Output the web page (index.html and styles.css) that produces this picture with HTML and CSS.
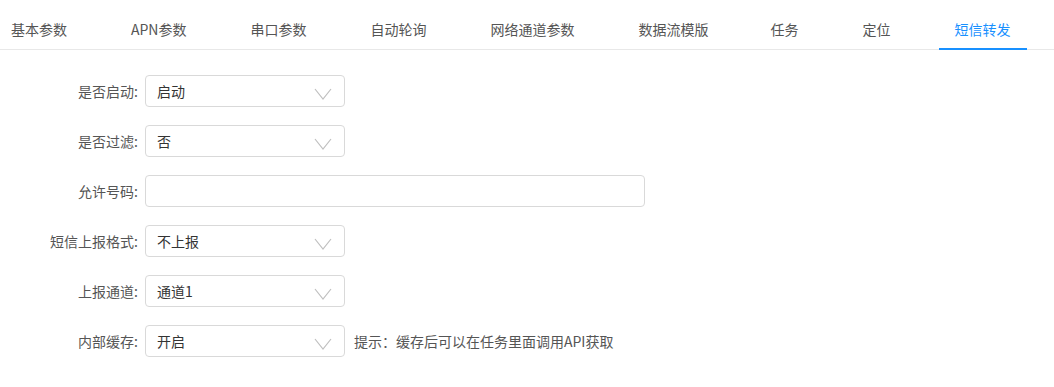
FILE: index.html
```html
<!DOCTYPE html>
<html lang="zh-CN">
<head>
    <meta charset="UTF-8">
    <meta name="viewport" content="width=device-width, initial-scale=1.0">
    <title>短信转发</title>
    <link rel="stylesheet" href="styles.css">
</head>
<body>
    <nav class="tabs">
        <div class="tab">基本参数</div>
        <div class="tab">APN参数</div>
        <div class="tab">串口参数</div>
        <div class="tab">自动轮询</div>
        <div class="tab">网络通道参数</div>
        <div class="tab">数据流模版</div>
        <div class="tab">任务</div>
        <div class="tab">定位</div>
        <div class="tab active">短信转发</div>
    </nav>
    <form class="form">
        <div class="row">
            <label class="label">是否启动:</label>
            <div class="select"><span>启动</span>
                <svg class="arrow" width="18" height="12" viewBox="0 0 18 12"><polyline points="1,1 9,11 17,1" fill="none" stroke="#bfbfbf" stroke-width="1.2"/></svg>
            </div>
        </div>
        <div class="row">
            <label class="label">是否过滤:</label>
            <div class="select"><span>否</span>
                <svg class="arrow" width="18" height="12" viewBox="0 0 18 12"><polyline points="1,1 9,11 17,1" fill="none" stroke="#bfbfbf" stroke-width="1.2"/></svg>
            </div>
        </div>
        <div class="row">
            <label class="label">允许号码:</label>
            <div class="input"></div>
        </div>
        <div class="row">
            <label class="label">短信上报格式:</label>
            <div class="select"><span>不上报</span>
                <svg class="arrow" width="18" height="12" viewBox="0 0 18 12"><polyline points="1,1 9,11 17,1" fill="none" stroke="#bfbfbf" stroke-width="1.2"/></svg>
            </div>
        </div>
        <div class="row">
            <label class="label">上报通道:</label>
            <div class="select"><span>通道1</span>
                <svg class="arrow" width="18" height="12" viewBox="0 0 18 12"><polyline points="1,1 9,11 17,1" fill="none" stroke="#bfbfbf" stroke-width="1.2"/></svg>
            </div>
        </div>
        <div class="row">
            <label class="label">内部缓存:</label>
            <div class="select"><span>开启</span>
                <svg class="arrow" width="18" height="12" viewBox="0 0 18 12"><polyline points="1,1 9,11 17,1" fill="none" stroke="#bfbfbf" stroke-width="1.2"/></svg>
            </div>
            <span class="hint">提示：缓存后可以在任务里面调用API获取</span>
        </div>
    </form>
</body>
</html>
```

FILE: styles.css
```css
* {
    margin: 0;
    padding: 0;
    box-sizing: border-box;
}
body {
    background-color: #fff;
    font-family: "Noto Sans CJK SC", "Noto Sans", sans-serif;
    font-size: 14px;
    color: #555;
    overflow: hidden;
}
.tabs {
    display: flex;
    gap: 32px;
    margin-left: -5px;
    height: 50px;
    border-bottom: 1px solid #e8e8e8;
}
.tab {
    padding: 18px 16px 0;
    line-height: 22px;
    height: 49px;
    white-space: nowrap;
    color: #555;
}
.tab:nth-child(7) {
    margin-left: -2px;
}
.tab.active {
    color: #1890ff;
    border-bottom: 2px solid #1890ff;
    height: 50px;
}
.form {
    display: flex;
    flex-direction: column;
    gap: 18px;
    padding-top: 25px;
}
.row {
    display: flex;
    align-items: center;
    height: 32px;
}
.label {
    width: 138px;
    margin-right: 7px;
    text-align: right;
    color: #555;
    line-height: 22px;
}
.select {
    width: 200px;
    height: 32px;
    border: 1px solid #d9d9d9;
    border-radius: 4px;
    display: flex;
    align-items: center;
    justify-content: space-between;
    padding: 0 12px 0 11px;
    color: #333;
    line-height: 22px;
}
.arrow {
    display: block;
    margin-top: 6px;
}
.input {
    width: 500px;
    height: 32px;
    border: 1px solid #d9d9d9;
    border-radius: 4px;
}
.hint {
    margin-left: 9px;
    color: #555;
    line-height: 22px;
}
```
